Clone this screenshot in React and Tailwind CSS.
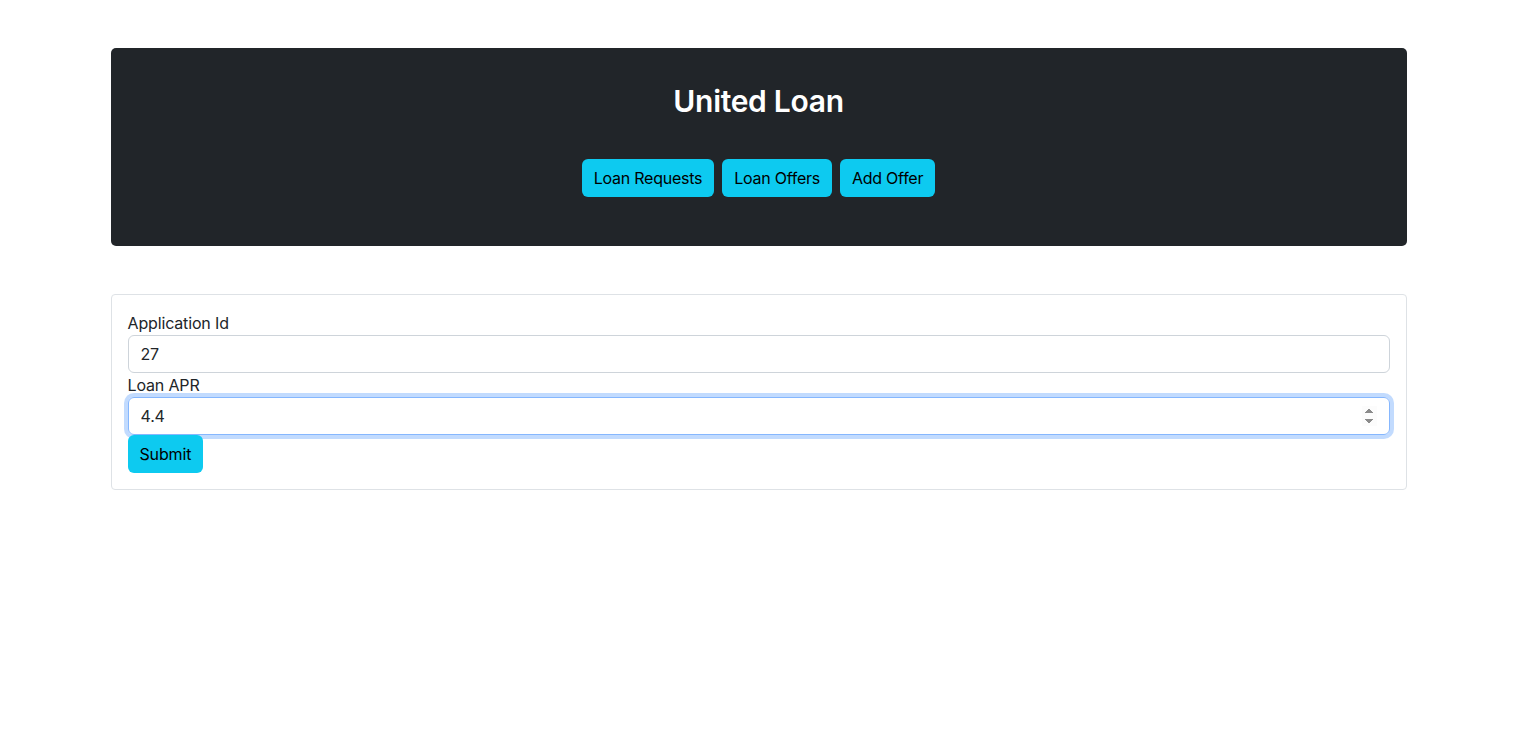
import { useState } from "react";

const NavButton = ({ children }) => (
  <button className="bg-[#0dcaf0] text-black text-base leading-6 tracking-[-0.25px] px-3 py-[7px] rounded-[6px]">
    {children}
  </button>
);

const App = () => {
  const [input, setInput] = useState({ app_id: "27", apr: "4.4" });

  const handleOnchange = (e) => {
    setInput((prev) => ({ ...prev, [e.target.name]: e.target.value }));
  };

  return (
    <div className="min-h-screen bg-white text-[#212529] font-['Inter','Helvetica',sans-serif]">
      <div className="w-[1296px] mx-auto pt-12">
        {/* header */}
        <div className="bg-[#212529] rounded-[5px] pt-[34px] pb-[49px] flex flex-col items-center">
          <h1 className="text-white text-[30px] leading-[38px] font-semibold tracking-[-0.3px]">United Loan</h1>
          <div className="flex gap-2 mt-[39px]">
            <NavButton>Loan Requests</NavButton>
            <NavButton>Loan Offers</NavButton>
            <NavButton>Add Offer</NavButton>
          </div>
        </div>

        {/* form */}
        <div className="mt-12 border border-[#dee2e6] rounded-[4px] p-4 tracking-[-0.15px]">
          <form onSubmit={(e) => e.preventDefault()}>
            <label className="block text-base leading-6">Application Id</label>
            <input
              type="text"
              name="app_id"
              value={input.app_id}
              onChange={handleOnchange}
              className="block w-full h-[38px] border border-[#ced4da] rounded-[6px] px-3 text-base outline-none"
            />
            <label className="block text-base leading-6">Loan APR</label>
            <input
              type="number"
              name="apr"
              autoFocus
              value={input.apr}
              onChange={handleOnchange}
              className="block w-full h-[38px] border border-[#86b7fe] rounded-[6px] px-3 text-base outline-none shadow-[0_0_0_4px_rgba(13,110,253,0.25)]"
            />
            <button
              type="submit"
              className="bg-[#0dcaf0] text-black text-base leading-6 px-3 py-[7px] rounded-[6px]"
            >
              Submit
            </button>
          </form>
        </div>
      </div>
    </div>
  );
};

export default App;
